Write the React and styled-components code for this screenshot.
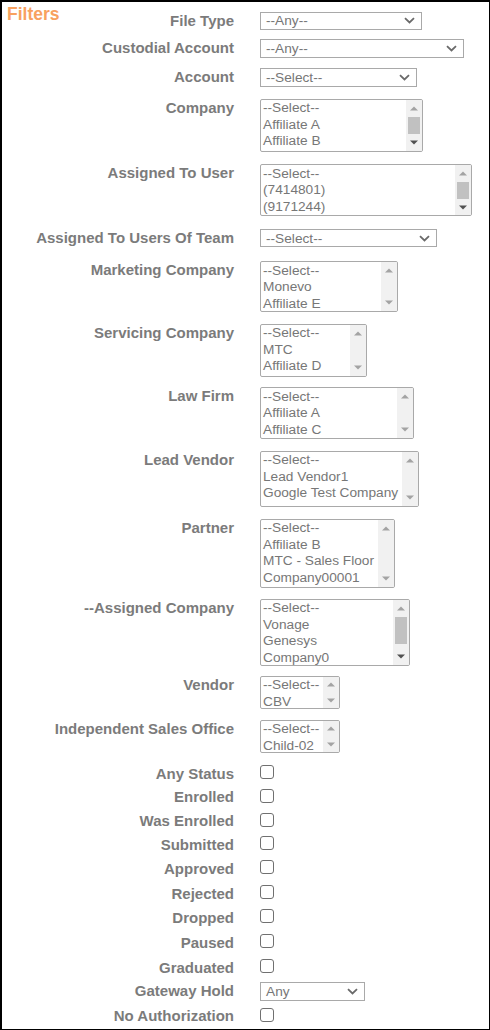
import React from 'react';
import styled, { createGlobalStyle } from 'styled-components';

const GlobalStyle = createGlobalStyle`
  html, body {
    margin: 0;
    padding: 0;
    background: #fff;
  }
  body {
    font-family: "Liberation Sans", Arial, sans-serif;
  }
`;

const Panel = styled.div`
  box-sizing: border-box;
  width: 490px;
  height: 1030px;
  border-style: solid;
  border-color: #000;
  border-width: 2px 1px 1px 2px;
  display: grid;
  grid-template-columns: 1fr;
  grid-template-rows: 1fr;
  overflow: hidden;
`;

const Title = styled.h2`
  grid-area: 1 / 1;
  align-self: start;
  justify-self: start;
  margin: 0;
  padding: 1.5px 0 0 5px;
  font-size: 17.5px;
  font-weight: bold;
  color: #f8a15f;
`;

const Form = styled.div`
  grid-area: 1 / 1;
  padding-top: 9.7px;
  display: flex;
  flex-direction: column;
`;

const Row = styled.div`
  display: grid;
  grid-template-columns: 232px max-content;
  column-gap: 26px;
  align-items: start;
  height: ${(p) => p.$pitch}px;
`;

const Label = styled.label`
  text-align: right;
  font-size: 15px;
  font-weight: bold;
  line-height: 17px;
  color: #7b7b7b;
  white-space: nowrap;
`;

const Dropdown = styled.div`
  box-sizing: border-box;
  width: ${(p) => p.$w}px;
  height: 18.5px;
  border: 1px solid #a9a9a9;
  display: flex;
  align-items: center;
  justify-content: space-between;
  padding: 0 6px 0 5px;
  font-size: 13.7px;
  color: #777;
`;

const ListBox = styled.div`
  box-sizing: border-box;
  width: ${(p) => p.$w}px;
  height: ${(p) => p.$h}px;
  border: 1px solid #a9a9a9;
  border-radius: 2px;
  display: flex;
  overflow: hidden;
`;

const Options = styled.div`
  flex: 1;
  min-width: 0;
  padding-top: 0.5px;
`;

const Option = styled.div`
  padding: 0 2px;
  font-size: 13.7px;
  line-height: 16.5px;
  color: #777;
  white-space: nowrap;
  overflow: hidden;
`;

const ScrollBar = styled.div`
  flex: none;
  width: 16px;
  background: #f1f1f1;
  display: flex;
  flex-direction: column;
`;

const ArrowBtn = styled.div`
  flex: 0 1 17px;
  display: flex;
  align-items: center;
  justify-content: center;
`;

const Track = styled.div`
  flex: 1 1 0;
  display: flex;
  flex-direction: column;
  padding: 0 2px;
`;

const Thumb = styled.div`
  height: ${(p) => p.$h}px;
  background: #c1c1c1;
`;

const Check = styled.input.attrs({ type: 'checkbox' })`
  appearance: none;
  box-sizing: border-box;
  margin: 0.5px 0 0;
  width: 14px;
  height: 14px;
  border: 1.5px solid #707070;
  border-radius: 3px;
  background: #fff;
`;

function Chevron() {
  return (
    <svg width="11" height="7" viewBox="0 0 11 7">
      <path d="M1 1.2l4.5 4.3 4.5-4.3" fill="none" stroke="#6a6a6a" strokeWidth="1.8" />
    </svg>
  );
}

function Arrow({ up, dark }) {
  return (
    <svg width="8" height="5" viewBox="0 0 8 5">
      <polygon points={up ? '0,4.5 8,4.5 4,0.5' : '0,0.5 8,0.5 4,4.5'} fill={dark ? '#505050' : '#a3a3a3'} />
    </svg>
  );
}

function Select({ w, value }) {
  return (
    <Dropdown $w={w}>
      <span>{value}</span>
      <Chevron />
    </Dropdown>
  );
}

function List({ w, h, options, thumb }) {
  return (
    <ListBox $w={w} $h={h}>
      <Options>
        {options.map((o) => (
          <Option key={o}>{o}</Option>
        ))}
      </Options>
      <ScrollBar>
        <ArrowBtn>
          <Arrow up />
        </ArrowBtn>
        <Track>{thumb ? <Thumb $h={thumb} /> : null}</Track>
        <ArrowBtn>
          <Arrow dark={!!thumb} />
        </ArrowBtn>
      </ScrollBar>
    </ListBox>
  );
}

const rows = [
  { label: 'File Type', pitch: 27.6, kind: 'select', w: 162, value: '--Any--' },
  { label: 'Custodial Account', pitch: 29, kind: 'select', w: 204, value: '--Any--' },
  { label: 'Account', pitch: 30.7, kind: 'select', w: 157, value: '--Select--' },
  { label: 'Company', pitch: 65.3, kind: 'list', w: 163, h: 53, thumb: 17, options: ['--Select--', 'Affiliate A', 'Affiliate B'] },
  { label: 'Assigned To User', pitch: 64.7, kind: 'list', w: 212, h: 52, thumb: 17, options: ['--Select--', '(7414801)', '(9171244)'] },
  { label: 'Assigned To Users Of Team', pitch: 32.3, kind: 'select', w: 177, value: '--Select--' },
  { label: 'Marketing Company', pitch: 62.7, kind: 'list', w: 138, h: 51, options: ['--Select--', 'Monevo', 'Affiliate E'] },
  { label: 'Servicing Company', pitch: 63.3, kind: 'list', w: 107, h: 53, options: ['--Select--', 'MTC', 'Affiliate D'] },
  { label: 'Law Firm', pitch: 63.7, kind: 'list', w: 154, h: 52, options: ['--Select--', 'Affiliate A', 'Affiliate C'] },
  { label: 'Lead Vendor', pitch: 68, kind: 'list', w: 159, h: 56, options: ['--Select--', 'Lead Vendor1', 'Google Test Company'] },
  { label: 'Partner', pitch: 80, kind: 'list', w: 135, h: 69, options: ['--Select--', 'Affiliate B', 'MTC - Sales Floor', 'Company00001'] },
  { label: '--Assigned Company', pitch: 77, kind: 'list', w: 150, h: 67, thumb: 27, options: ['--Select--', 'Vonage', 'Genesys', 'Company0'] },
  { label: 'Vendor', pitch: 44, kind: 'list', w: 80, h: 33, options: ['--Select--', 'CBV'] },
  { label: 'Independent Sales Office', pitch: 45, kind: 'list', w: 80, h: 33, options: ['--Select--', 'Child-02'] },
  { label: 'Any Status', pitch: 23.3, kind: 'check' },
  { label: 'Enrolled', pitch: 24, kind: 'check' },
  { label: 'Was Enrolled', pitch: 23.7, kind: 'check' },
  { label: 'Submitted', pitch: 24, kind: 'check' },
  { label: 'Approved', pitch: 24.7, kind: 'check' },
  { label: 'Rejected', pitch: 24.3, kind: 'check' },
  { label: 'Dropped', pitch: 25, kind: 'check' },
  { label: 'Paused', pitch: 25, kind: 'check' },
  { label: 'Graduated', pitch: 23.3, kind: 'check' },
  { label: 'Gateway Hold', pitch: 25, kind: 'select', w: 105, value: 'Any' },
  { label: 'No Authorization', pitch: 20, kind: 'check' },
];

function App() {
  const renderControl = (row) => {
    if (row.kind === 'select') return <Select w={row.w} value={row.value} />;
    if (row.kind === 'list') return <List w={row.w} h={row.h} options={row.options} thumb={row.thumb} />;
    return <Check />;
  };

  return (
    <>
      <GlobalStyle />
      <Panel>
        <Title>Filters</Title>
        <Form>
          {rows.map((row) => (
            <Row key={row.label} $pitch={row.pitch}>
              <Label>{row.label}</Label>
              {renderControl(row)}
            </Row>
          ))}
        </Form>
      </Panel>
    </>
  );
}

export default App;
